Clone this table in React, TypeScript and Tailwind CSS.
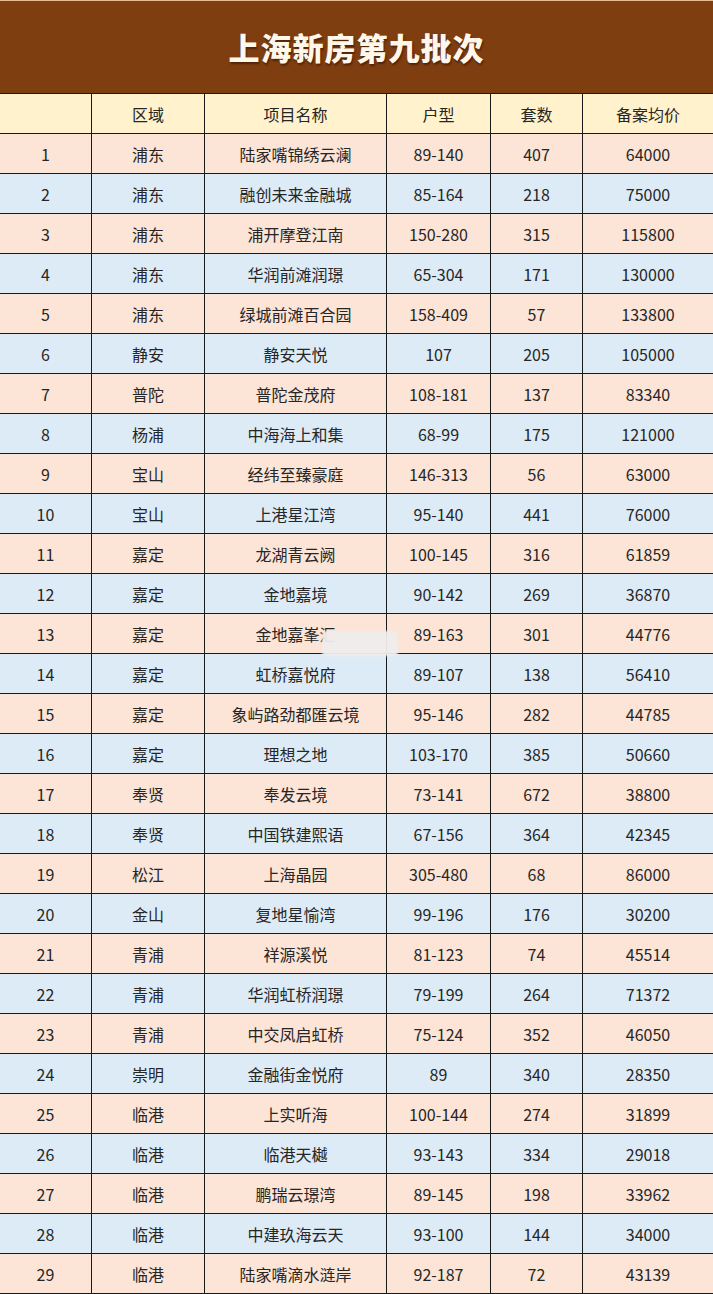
import React from "react";

type Row = [string, string, string, string, string];

const rows: Row[] = [
  ["浦东", "陆家嘴锦绣云澜", "89-140", "407", "64000"],
  ["浦东", "融创未来金融城", "85-164", "218", "75000"],
  ["浦东", "浦开摩登江南", "150-280", "315", "115800"],
  ["浦东", "华润前滩润璟", "65-304", "171", "130000"],
  ["浦东", "绿城前滩百合园", "158-409", "57", "133800"],
  ["静安", "静安天悦", "107", "205", "105000"],
  ["普陀", "普陀金茂府", "108-181", "137", "83340"],
  ["杨浦", "中海海上和集", "68-99", "175", "121000"],
  ["宝山", "经纬至臻豪庭", "146-313", "56", "63000"],
  ["宝山", "上港星江湾", "95-140", "441", "76000"],
  ["嘉定", "龙湖青云阙", "100-145", "316", "61859"],
  ["嘉定", "金地嘉境", "90-142", "269", "36870"],
  ["嘉定", "金地嘉峯汇", "89-163", "301", "44776"],
  ["嘉定", "虹桥嘉悦府", "89-107", "138", "56410"],
  ["嘉定", "象屿路劲都匯云境", "95-146", "282", "44785"],
  ["嘉定", "理想之地", "103-170", "385", "50660"],
  ["奉贤", "奉发云境", "73-141", "672", "38800"],
  ["奉贤", "中国铁建熙语", "67-156", "364", "42345"],
  ["松江", "上海晶园", "305-480", "68", "86000"],
  ["金山", "复地星愉湾", "99-196", "176", "30200"],
  ["青浦", "祥源溪悦", "81-123", "74", "45514"],
  ["青浦", "华润虹桥润璟", "79-199", "264", "71372"],
  ["青浦", "中交凤启虹桥", "75-124", "352", "46050"],
  ["崇明", "金融街金悦府", "89", "340", "28350"],
  ["临港", "上实听海", "100-144", "274", "31899"],
  ["临港", "临港天樾", "93-143", "334", "29018"],
  ["临港", "鹏瑞云璟湾", "89-145", "198", "33962"],
  ["临港", "中建玖海云天", "93-100", "144", "34000"],
  ["临港", "陆家嘴滴水涟岸", "92-187", "72", "43139"],
];

const headers = ["", "区域", "项目名称", "户型", "套数", "备案均价"];

const cell =
  "h-10 flex items-center justify-center border-b border-r border-[#1a1a1a] last:border-r-0";

export default function App() {
  return (
    <div className="w-[713px] bg-white font-['Noto_Sans_CJK_SC','Noto_Sans',sans-serif] text-[#262626]">
      {/* title */}
      <div className="h-[93px] bg-[#7f3e0f] border-t border-[#e9b98f] flex items-center justify-center">
        <h1 className="text-[31px] font-black tracking-[1px] text-[#fff8ea] [text-shadow:1px_2px_2px_rgba(40,15,0,0.55)]">
          上海新房第九批次
        </h1>
      </div>

      <div className="relative">
        {/* header row */}
        <div className="grid grid-cols-[92px_113px_182px_104px_92px_130px] bg-[#fff2cc] border-t border-[#1a1a1a] text-[16px]">
          {headers.map((h, i) => (
            <div key={i} className={`${cell} h-[40px]`}>
              {h}
            </div>
          ))}
        </div>

        {rows.map((r, i) => (
          <div
            key={i}
            className={`grid grid-cols-[92px_113px_182px_104px_92px_130px] text-[16px] ${
              i % 2 === 0 ? "bg-[#fce4d6]" : "bg-[#ddebf7]"
            }`}
          >
            <div className={cell}>{i + 1}</div>
            {r.map((v, j) => (
              <div key={j} className={cell}>
                {v}
              </div>
            ))}
          </div>
        ))}

        {/* watermark smudge */}
        <div className="absolute left-[322px] top-[538px] w-[76px] h-[25px] bg-[#efecec]/95 blur-[1px] rounded-sm" />
      </div>
    </div>
  );
}
